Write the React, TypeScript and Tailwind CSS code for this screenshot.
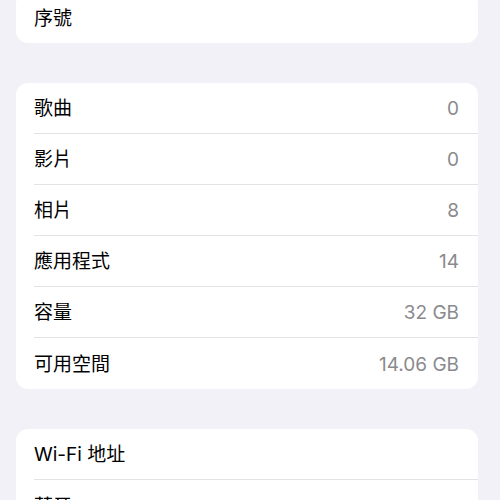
import React from 'react';

interface Row {
  label: string;
  value?: string;
}

const mediaRows: Row[] = [
  { label: '歌曲', value: '0' },
  { label: '影片', value: '0' },
  { label: '相片', value: '8' },
  { label: '應用程式', value: '14' },
  { label: '容量', value: '32 GB' },
  { label: '可用空間', value: '14.06 GB' },
];

const networkRows: Row[] = [{ label: 'Wi-Fi 地址' }, { label: '藍牙' }];

function Group({ rows, className = '' }: { rows: Row[]; className?: string }) {
  return (
    <div className={`ml-4 w-[462px] rounded-xl bg-white ${className}`}>
      {rows.map((row, i) => (
        <div key={row.label} className="pl-[18px]">
          <div
            className={`flex h-[51px] items-center justify-between pr-[19px] pt-[3px] ${
              i < rows.length - 1 ? 'border-b border-[#e3e3e7]' : ''
            }`}
          >
            <span className="text-[19px] text-black">{row.label}</span>
            {row.value && <span className="text-[19px] text-[#8a8a8e]">{row.value}</span>}
          </div>
        </div>
      ))}
    </div>
  );
}

export default function App() {
  return (
    <div
      className="h-[500px] w-[500px] overflow-hidden bg-[#f2f1f7]"
      style={{ fontFamily: 'Inter, "Noto Sans CJK TC", sans-serif' }}
    >
      <Group rows={[{ label: '序號' }]} className="-mt-[8px]" />
      <Group rows={mediaRows} className="mt-10" />
      <Group rows={networkRows} className="mt-10" />
    </div>
  );
}
